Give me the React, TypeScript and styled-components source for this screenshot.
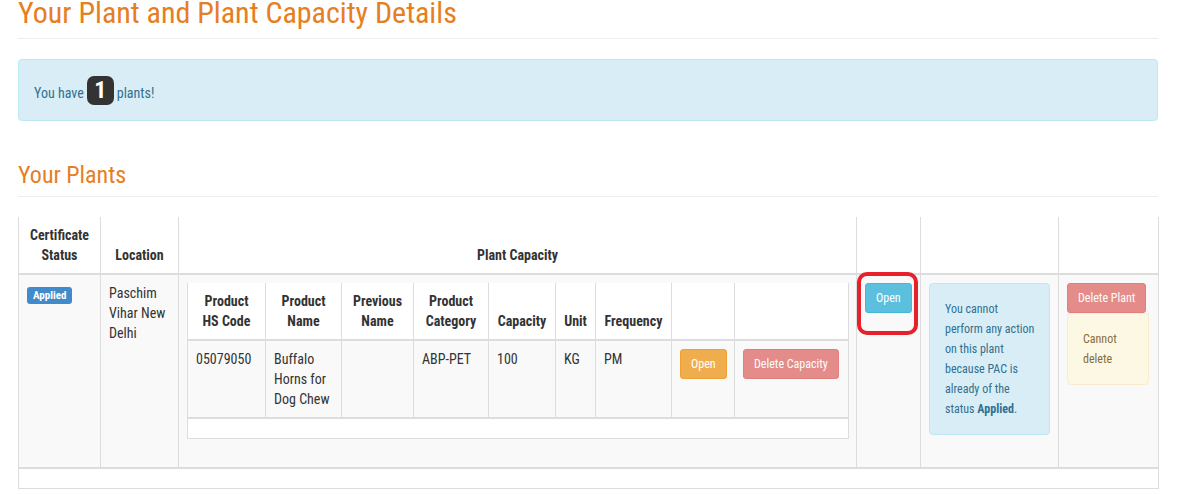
import React, { FC } from 'react';
import styled, { createGlobalStyle } from 'styled-components';

const GlobalStyle = createGlobalStyle`
  html, body {
    margin: 0;
    padding: 0;
    background: #fff;
  }
  body {
    font-family: 'Roboto Condensed', 'Liberation Sans Narrow', 'Roboto', sans-serif;
    font-size: 14px;
    line-height: 20px;
    color: #333;
  }
`;

const Page = styled.div`
  width: 1140px;
  padding: 0 20px 0 18px;
`;

const PageHeader = styled.div<{ size: number; lh: number; gap: number }>`
  border-bottom: 1px solid #eee;
  padding-bottom: ${props => props.gap}px;
  h1,
  h3 {
    margin: 0;
    font-weight: 400;
    color: #e67e22;
    font-size: ${props => props.size}px;
    line-height: ${props => props.lh}px;
  }
`;

const Alert = styled.div<{ kind: 'info' | 'warning' }>`
  border-radius: 4px;
  border: 1px solid ${props => (props.kind === 'info' ? '#bce8f1' : '#faebcc')};
  background: ${props => (props.kind === 'info' ? '#d9edf7' : '#fcf8e3')};
  color: ${props => (props.kind === 'info' ? '#31708f' : '#8a6d3b')};
  padding: 15px;
`;

const TopAlert = styled(Alert)`
  margin: 20px 0 41px;
  padding: 16px 15px 15px;
  display: flex;
  align-items: baseline;
  gap: 3px;
`;

const Badge = styled.span`
  display: inline-block;
  width: 27px;
  text-align: center;
  padding: 2px 0 3px;
  line-height: 24px;
  border-radius: 7px;
  background: #333;
  color: #fff;
  font-size: 24px;
  font-weight: 700;
`;

const SmallAlert = styled(Alert)`
  font-size: 12px;
  line-height: 20px;
  padding: 15px;
`;

const NoWrap = styled.span`
  white-space: nowrap;
`;

const Table = styled.table<{ nested?: boolean }>`
  width: 100%;
  border-collapse: collapse;
  table-layout: fixed;
  border-left: 1px solid #ddd;
  border-right: 1px solid #ddd;
  border-bottom: 1px solid #ddd;
  margin: ${props => (props.nested ? '0 0 20px' : '20px 0 0')};

  > thead > tr > th,
  > tbody > tr > td {
    border-left: 1px solid #ddd;
    border-right: 1px solid #ddd;
    padding: 8px;
    text-align: left;
  }
  > thead > tr > th {
    font-weight: 700;
    text-align: center;
    vertical-align: bottom;
    border-bottom: 2px solid #ddd;
    background: #fff;
  }
  > tbody > tr > td {
    vertical-align: top;
    border-top: 1px solid #ddd;
  }
  > tbody:first-of-type > tr > td {
    background: #f9f9f9;
  }
  > tbody + tbody {
    border-top: 2px solid #ddd;
  }
`;

const EmptyCell = styled.td<{ h: number }>`
  && {
    padding: 0;
    height: ${props => props.h}px;
    background: #fff;
  }
`;

const Label = styled.span`
  display: inline-block;
  background: #428bca;
  color: #fff;
  font-size: 11px;
  font-weight: 700;
  line-height: 12px;
  padding: 3px 6px 2px;
  border-radius: 3px;
  vertical-align: -1px;
`;

const colors = {
  warning: ['#f0ad4e', '#eea236'],
  danger: ['#d9534f', '#d43f3a'],
  info: ['#5bc0de', '#46b8da']
};

const Button = styled.button<{ variant: keyof typeof colors; disabled?: boolean }>`
  font-family: inherit;
  font-size: 12px;
  line-height: 18px;
  padding: 5px 10px;
  border-radius: 3px;
  color: #fff;
  background: ${props => colors[props.variant][0]};
  border: 1px solid ${props => colors[props.variant][1]};
  opacity: ${props => (props.disabled ? 0.65 : 1)};
  cursor: ${props => (props.disabled ? 'not-allowed' : 'pointer')};
  white-space: nowrap;
`;

const Highlight = styled.div`
  position: relative;
`;

const RedRing = styled.div`
  position: absolute;
  left: -8px;
  top: -11px;
  width: 53px;
  height: 55px;
  border: 4px solid #e8202a;
  border-radius: 10px;
  pointer-events: none;
`;

const StackedAlert = styled(SmallAlert)`
  border-top-left-radius: 0;
  border-top-right-radius: 0;
  margin-right: 1px;
`;

const capacityColumns = [
  { title: ['Product', 'HS Code'], width: 78 },
  { title: ['Product', 'Name'], width: 76 },
  { title: ['Previous', 'Name'], width: 72 },
  { title: ['Product', 'Category'], width: 75 },
  { title: ['Capacity'], width: 67 },
  { title: ['Unit'], width: 40 },
  { title: ['Frequency'], width: 76 },
  { title: [], width: 63 },
  { title: [], width: 114 }
];

const CapacityTable: FC = () => (
  <Table nested>
    <colgroup>
      {capacityColumns.map((c, i) => (
        <col key={i} style={{ width: c.width }} />
      ))}
    </colgroup>
    <thead>
      <tr>
        {capacityColumns.map((c, i) => (
          <th key={i}>
            {c.title.map((t, j) => (
              <React.Fragment key={j}>
                {j > 0 && <br />}
                {t}
              </React.Fragment>
            ))}
          </th>
        ))}
      </tr>
    </thead>
    <tbody>
      <tr>
        <td>05079050</td>
        <td>Buffalo Horns for Dog Chew</td>
        <td></td>
        <td>ABP-PET</td>
        <td>100</td>
        <td>KG</td>
        <td>PM</td>
        <td>
          <Button variant="warning">Open</Button>
        </td>
        <td>
          <Button variant="danger" disabled>
            Delete Capacity
          </Button>
        </td>
      </tr>
    </tbody>
    <tbody>
      <tr>
        <EmptyCell h={19} colSpan={9} />
      </tr>
    </tbody>
  </Table>
);

export default function App() {
  return (
    <Page>
      <GlobalStyle />
      <PageHeader size={30} lh={26} gap={12}>
        <h1>Your Plant and Plant Capacity Details</h1>
      </PageHeader>
      <TopAlert kind="info">
        You have <Badge>1</Badge> plants!
      </TopAlert>
      <PageHeader size={24} lh={26} gap={8}>
        <h3>Your Plants</h3>
      </PageHeader>
      <Table>
        <colgroup>
          <col style={{ width: 82 }} />
          <col style={{ width: 78 }} />
          <col style={{ width: 678 }} />
          <col style={{ width: 64 }} />
          <col style={{ width: 138 }} />
          <col style={{ width: 100 }} />
        </colgroup>
        <thead>
          <tr>
            <th>
              Certificate
              <br />
              Status
            </th>
            <th>Location</th>
            <th>Plant Capacity</th>
            <th></th>
            <th></th>
            <th></th>
          </tr>
        </thead>
        <tbody>
          <tr>
            <td>
              <Label>Applied</Label>
            </td>
            <td>Paschim Vihar New Delhi</td>
            <td>
              <CapacityTable />
            </td>
            <td>
              <Highlight>
                <Button variant="info">Open</Button>
                <RedRing />
              </Highlight>
            </td>
            <td>
              <SmallAlert kind="info">
                You cannot <NoWrap>perform any action</NoWrap> on this plant because PAC is already
                of the status <b>Applied</b>.
              </SmallAlert>
            </td>
            <td>
              <Button variant="danger" disabled>
                Delete Plant
              </Button>
              <StackedAlert kind="warning">
                Cannot
                <br />
                delete
              </StackedAlert>
            </td>
          </tr>
        </tbody>
        <tbody>
          <tr>
            <EmptyCell h={19} colSpan={6} />
          </tr>
        </tbody>
      </Table>
    </Page>
  );
}
